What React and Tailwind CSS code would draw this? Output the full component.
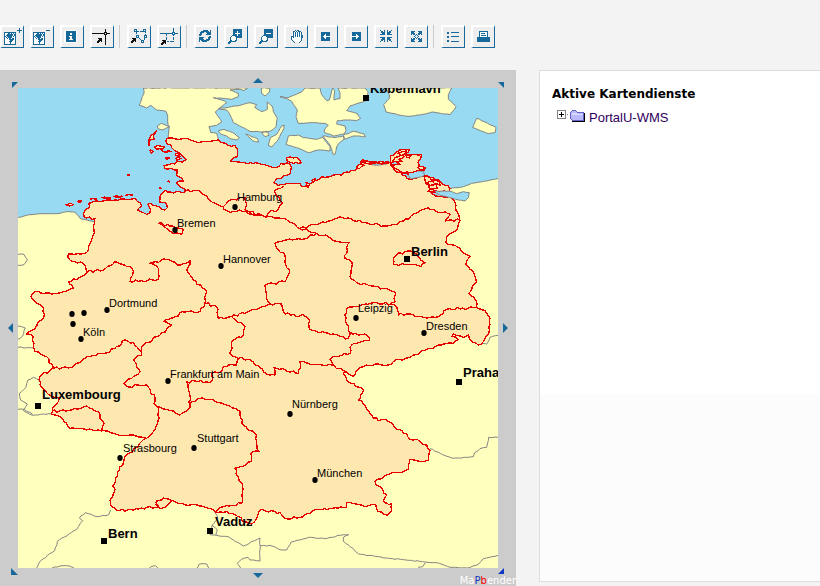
import React from "react";

const BLUE = "#17699c";

// ---------- toolbar icons ----------

function bitmap(rows, ox, oy) {
  let d = "";
  rows.forEach((row, y) => {
    [...row].forEach((c, x) => {
      if (c === "#") d += `M${x + ox} ${y + oy}h1v1h-1z`;
    });
  });
  return d;
}

const MAP_ROWS = [
  "############",
  "#...##.#.#.#",
  "#..######.##",
  "#.#######.##",
  "##.#####.#.#",
  "#.#.####...#",
  "#..#.##.##.#",
  "#....#####.#",
  "#.....###..#",
  "#....###...#",
  "#.....#....#",
  "#.....#....#",
  "############",
];
const POINTER = [".####", "..###", ".####", "###.#", "##..."];
const REFRESH = [
  "....#####..#",
  "..########.#",
  ".####..#####",
  ".##.....####",
  "###....#####",
  "##..........",
  "..........##",
  "#####....###",
  "####.....##.",
  "#####..####.",
  "#.########..",
  "#..#####....",
];
const SHRINK = [
  "#...#..#...#",
  ".##.#..#.##.",
  ".####..####.",
  "..###..###..",
  "#####..#####",
  "............",
  "............",
  "#####..#####",
  "..###..###..",
  ".####..####.",
  ".##.#..#.##.",
  "#...#..#...#",
];
const GROW = [
  "####...####",
  "###.....###",
  "####...####",
  "#.##.#.##.#",
  "....#.#....",
  "...#...#...",
  "....#.#....",
  "#.##.#.##.#",
  "####...####",
  "###.....###",
  "####...####",
];
const HAND = [
  "....#.##....",
  "..##.#.###..",
  "..#.#.#.#.#.",
  "..#.#.#.#.#.",
  "..#.#.#.#.#.",
  "..#.#.#.#.##",
  "###.#.#.#.##",
  "#.#.......##",
  "#.........#.",
  "#.........#.",
  ".#........#.",
  "..#......#..",
  "...#....#...",
];

function Px({ rows, x, y, fill = BLUE }) {
  return <path d={bitmap(rows, x, y)} fill={fill} />;
}

function MapSheet({ x }) {
  return (
    <>
      <rect x={x} y="7" width="12" height="13" fill="#fff" />
      <Px rows={MAP_ROWS} x={x} y={7} />
    </>
  );
}

function Node({ x, y, stroke = BLUE }) {
  return <rect x={x + 0.5} y={y + 0.5} width="2" height="2" fill="#fff" stroke={stroke} />;
}

function Lens({ x, plus }) {
  return (
    <>
      <rect x={x} y="4" width="9" height="9" fill={BLUE} />
      <path d={plus ? `M${x + 2} 8h5v1h-5zM${x + 4} 6h1v5h-1z` : `M${x + 2} 8h5v1h-5z`} fill="#fff" />
      <path d={`M${x - 1} 15L${x - 5} 19`} stroke={BLUE} strokeWidth="2.5" />
      <circle cx={x + 0.5} cy="13.5" r="3" fill="#fff" stroke={BLUE} />
    </>
  );
}

const ICONS = {
  addMap: <><MapSheet x={4} /><path d="M17 5h5v1h-5zM19 3h1v5h-1z" fill={BLUE} /></>,
  removeMap: <><MapSheet x={3} /><path d="M16 5h4v1h-4z" fill={BLUE} /></>,
  info: <><rect x="4" y="5" width="13" height="13" fill="#fff" /><rect x="6" y="6" width="10" height="11" fill={BLUE} /><path d="M10 8h2v2h-2zM9 11h3v3h1v1h-4v-1h1v-2h-1z" fill="#fff" /></>,
  coordinate: <><path d="M2 8h18v1h-18zM15 4h1v16h-1z" fill="#111" /><Node x={14} y={7} stroke="#111" /><Px rows={POINTER} x={7} y={13} fill="#111" /></>,
  area: <><path d="M9 6L13 7L18 6L19 11L16 17L10 11Z" fill="none" stroke={BLUE} strokeDasharray="3 1" /><Node x={7} y={4} /><Node x={16} y={4} /><Node x={9} y={10} /><Node x={17} y={10} /><Node x={14} y={15} /><Px rows={POINTER} x={4} y={13} fill="#111" /></>,
  distance: <><path d="M3 8h18v1h-18zM16 3h1v8h-1zM9 9h1v2h-1zM9 12h1v3h-1zM16 12h1v3h-1zM10 16h2v1h-2zM13 16h4v1h-4z" fill={BLUE} /><Node x={15} y={7} /><Px rows={POINTER} x={4} y={15} fill="#111" /></>,
  refresh: <Px rows={REFRESH} x={5} y={5} />,
  zoomIn: <Lens x={9} plus />,
  zoomOut: <Lens x={10} />,
  pan: <><path d="M9 6h8l1 6l-2 5h-5l-3-4z" fill="#fff" /><Px rows={HAND} x={7} y={5} /></>,
  back: <><rect x="7" y="7" width="9" height="9" fill={BLUE} /><path d="M9 11h9v1h-9zM10 10h1v3h-1zM11 9h1v5h-1z" fill="#fff" /></>,
  forward: <><rect x="8" y="7" width="9" height="9" fill={BLUE} /><path d="M6 11h9v1h-9zM13 10h1v3h-1zM12 9h1v5h-1z" fill="#fff" /></>,
  shrink: <Px rows={SHRINK} x={6} y={5} />,
  grow: <Px rows={GROW} x={7} y={6} />,
  legend: <path d="M6 7h2v2h-2zM6 11h2v2h-2zM6 15h2v2h-2zM10 7h8v1h-8zM10 11h8v1h-8zM10 16h8v1h-8z" fill={BLUE} />,
  print: <><rect x="8.5" y="6.5" width="8" height="7" fill="#fff" stroke={BLUE} /><path d="M10 8h4v1h-4zM10 10h5v1h-5zM6 12h13v5h-13z" fill={BLUE} /></>,
};

const TOOL_GROUPS = [
  [["addMap", "Karte hinzufügen"], ["removeMap", "Karte entfernen"], ["info", "Information"], ["coordinate", "Koordinate"]],
  [["area", "Fläche messen"], ["distance", "Strecke messen"]],
  [["refresh", "Neu laden"], ["zoomIn", "Vergrößern"], ["zoomOut", "Verkleinern"], ["pan", "Verschieben"], ["back", "Zurück"], ["forward", "Vor"], ["shrink", "Ausschnitt"], ["grow", "Gesamtansicht"]],
  [["legend", "Legende"], ["print", "Drucken"]],
];

function Toolbar() {
  return (
    <div role="toolbar" aria-label="Werkzeuge" className="flex h-[70px] pt-[25px]">
      {TOOL_GROUPS.map((group, i) => (
        <div key={i} className="flex shrink-0">
          {i > 0 && <div className="mr-[7px] ml-[5px] h-[23px] w-px bg-[#ccc]" />}
          <div className="flex gap-1.5">
            {group.map(([id, label]) => (
              <button
                key={id}
                type="button"
                aria-label={label}
                className="flex h-[23px] w-6 border-t-2 border-l-2 border-r border-b border-t-white border-l-white border-r-[#17699c] border-b-[#17699c] bg-[#eee]"
              >
                <svg viewBox="2 2 21 20" className="h-5 w-[21px]" shapeRendering="crispEdges" aria-hidden="true">
                  {ICONS[id]}
                </svg>
              </button>
            ))}
          </div>
        </div>
      ))}
    </div>
  );
}

// ---------- map geometry (three units per screen pixel) ----------

function parse(s) {
  return s.trim().split(/\s+/).map((p) => p.split(",").map(Number));
}

function trace(s, amount, closed) {
  let seed = 7;
  const rnd = () => {
    seed = (seed * 16807) % 2147483647;
    return seed / 2147483647 - 0.5;
  };
  const pts = parse(s);
  if (closed) pts.push(pts[0]);
  const out = [pts[0]];
  for (let i = 1; i < pts.length; i++) {
    const [ax, ay] = pts[i - 1];
    const [bx, by] = pts[i];
    const len = Math.hypot(bx - ax, by - ay);
    const n = Math.floor(len / 8);
    for (let k = 1; k < n; k++) {
      const o = rnd() * amount;
      out.push([
        Math.round(ax + ((bx - ax) * k) / n - ((by - ay) / len) * o),
        Math.round(ay + ((by - ay) * k) / n + ((bx - ax) / len) * o),
      ]);
    }
    out.push([bx, by]);
  }
  return "M" + out.map((p) => p.join(" ")).join("L") + (closed ? "Z" : "");
}

const LAND = [
  "430,264 432,280 424,300 418,316 440,324 452,316 470,330 498,334 503,346 504,374 508,378 504,414 560,420 600,432 640,426 655,420 650,400 632,398 627,380 650,376 665,366 655,350 646,336 680,308 665,300 640,293 695,298 715,290 715,280 690,270 722,268 732,272 743,264",
  "655,326 685,322 720,316 750,308 770,314 764,322 785,335 802,328 802,306 816,318 820,335 832,355 828,380 810,394 785,396 750,394 727,382 700,368 690,345 680,330",
  "655,393 672,388 698,398 718,412 712,420 690,416 680,408 662,402",
  "737,402 772,416 776,426 758,422",
  "785,398 803,396 807,406 795,410",
  "853,376 847,395 830,425 815,441 805,436 812,412 830,403 845,378",
  "785,264 810,264 808,276 795,288 785,280",
  "840,290 865,293 905,276 915,264 960,264 965,284 980,302 988,300 998,264 1004,272 1002,300 1020,296 1020,278 1014,264 1095,264 1104,275 1104,300 1080,308 1050,318 1040,332 1072,341 1082,355 1070,362 1042,360 1012,362 1010,372 1035,378 1038,392 1032,402 1000,408 972,396 975,386 985,376 975,370 945,368 895,370 888,350 892,330 875,304 860,296",
  "865,408 895,405 910,413 950,418 968,412 980,428 990,440 990,453 955,450 925,458 890,443 858,433",
  "968,408 1005,413 1030,408 1032,418 1018,428 1010,440 1006,462 1000,464 990,435",
  "1030,406 1060,394 1092,402 1096,410 1060,408 1035,418",
  "1155,264 1168,284 1168,296 1151,314 1158,336 1220,349 1260,345 1300,336 1350,344 1368,320 1345,298 1345,284 1355,264",
  "1430,355 1488,382 1485,398 1465,401 1418,383",
  "472,378 484,370 498,376 508,380 496,386 486,390 474,386",
  "48,655 80,646 120,641 180,640 200,635 225,636 240,655 285,666 400,760 700,800 1100,800 1330,570 1350,566 1390,560 1415,550 1460,543 1500,533 1500,1710 48,1710",
];

const GERMANY =
  "285,656 252,651 255,630 270,618 266,610 290,603 320,600 380,598 404,595 412,604 425,618 412,630 430,638 440,643 450,638 444,612 460,616 478,620 495,630 502,623 500,610 478,606 480,588 495,570 512,576 555,576 555,568 538,558 530,548 550,543 545,533 530,526 532,510 495,506 492,496 515,490 548,486 558,478 540,460 515,443 498,423 500,415 555,416 595,428 640,422 655,420 665,428 685,436 705,436 712,448 712,470 690,483 735,488 775,490 820,503 860,488 870,493 872,520 850,528 825,543 822,548 835,556 870,551 900,550 905,560 920,558 940,543 965,530 1025,525 1070,508 1088,479 1110,485 1170,488 1185,510 1232,538 1275,528 1315,540 1350,566 1348,574 1290,576 1300,584 1350,590 1362,600 1380,663 1372,688 1340,710 1337,728 1380,745 1410,770 1398,795 1422,820 1430,845 1415,870 1407,880 1430,905 1428,922 1455,932 1470,955 1468,990 1450,1025 1435,1035 1410,1020 1405,1005 1390,1012 1360,1002 1355,1010 1375,1018 1360,1030 1305,1040 1240,1065 1180,1085 1165,1095 1135,1092 1080,1102 1060,1130 1040,1115 1030,1120 1040,1140 1090,1170 1075,1200 1095,1217 1110,1240 1135,1262 1155,1258 1190,1288 1220,1300 1230,1318 1250,1318 1280,1335 1290,1350 1285,1380 1270,1385 1230,1378 1225,1408 1205,1418 1170,1422 1125,1445 1160,1485 1150,1505 1175,1512 1175,1530 1162,1545 1135,1535 1128,1515 1095,1520 1070,1512 1040,1508 1040,1522 955,1528 900,1552 855,1555 840,1538 780,1530 772,1550 755,1572 735,1565 715,1550 680,1535 650,1538 640,1530 600,1518 530,1508 510,1500 495,1496 470,1503 468,1514 485,1525 440,1522 400,1530 350,1532 332,1515 330,1500 345,1468 338,1458 358,1410 372,1378 400,1348 440,1315 400,1305 350,1303 310,1292 260,1290 210,1285 200,1270 180,1250 155,1242 158,1225 175,1205 178,1193 155,1188 120,1155 120,1130 150,1112 160,1102 140,1070 105,1055 100,1040 100,1010 80,1002 105,985 132,950 130,925 110,910 92,890 105,875 165,880 220,865 205,845 245,830 262,815 250,790 210,780 205,762 260,758 270,730 283,700 280,680";

const BORDERS = [
  "555,573 600,573 640,608 670,620",
  "670,620 680,610 700,598 735,593 740,613 735,628 755,643 780,646 750,643 720,630 690,638 672,628 670,620",
  "750,636 790,648 855,655 900,686 925,693 950,700 985,710 1010,724 1047,728 1035,775 1055,785 1050,830 1075,850 1150,865 1187,878 1185,905 1170,912 1190,920 1195,948",
  "800,648 805,638 835,628 848,608 830,588 822,573 850,558",
  "900,686 945,673 985,663 1020,650 1095,668 1160,678 1210,663 1270,628 1285,623 1325,638 1352,643 1335,663 1380,660",
  "950,698 915,716 860,720 825,730 830,745 855,765 855,785 868,820 855,845 795,855 800,885 810,912",
  "1195,945 1220,942 1270,952 1315,950 1340,928 1428,922",
  "1175,912 1120,908 1080,918 1040,925 1035,945 1045,990 1050,1000 1095,1002 1110,1020 1055,1035 1050,1060 1000,1070 990,1078 1000,1095",
  "695,950 750,933 810,912 845,912 855,942 915,948 930,960 928,988 975,998 1045,1015 1055,995",
  "715,1075 745,1078 780,1102 800,1122 825,1125 822,1102 895,1120 900,1085 925,1090 995,1095 1040,1118",
  "262,815 310,810 345,785 390,800 400,815 390,845 475,838 475,805 450,790 500,778 540,795 570,782 560,810 580,840 620,875 615,910",
  "615,910 600,935 545,935 535,948 490,965 515,975 480,1005 425,1040 425,1065 400,1080 420,1115 372,1150 380,1160 440,1155 465,1195 462,1212 475,1225 478,1255 460,1295 440,1315",
  "160,1105 215,1102 260,1070 330,1055 375,1020 400,1028 425,1055",
  "615,910 650,920 655,955 695,950 735,980 730,1005 700,1020 690,1060 715,1075 710,1095 670,1100 665,1115 635,1120 635,1145 560,1145 570,1190 568,1225 540,1245 528,1240 500,1228 465,1215",
  "570,1225 575,1205 600,1195 640,1200 690,1218 720,1235 725,1270 770,1305 772,1350 778,1355 752,1360 755,1385 705,1405 728,1460 725,1510 670,1520 645,1535",
  "155,1235 215,1230 260,1218 295,1235 300,1255 312,1270 305,1295",
  "475,670 510,678 550,688 545,703 520,700 505,690 475,670",
  "1180,775 1190,765 1225,753 1248,760 1262,780 1275,788 1262,800 1250,795 1180,793 1180,775",
];

const ISLANDS = [
  "198,614 212,610 220,614 208,618", "232,604 244,602 240,608", "272,597 290,596 288,598", "305,593 330,592 332,594", "340,590 365,588 368,590", "378,585 396,584 398,586",
  "470,392 456,404 447,420 447,438 450,420 462,418 460,406", "464,440 480,438 494,440 488,448 470,448", "450,450 460,454 454,460", "496,472 510,474 500,478",
  "485,452 494,455 515,454 498,458", "528,474 545,476 530,482", "526,460 536,462 540,470 528,466", "480,562 483,565 480,566", "384,524 388,524 388,526 384,526", "505,542 508,546 504,545",
  "860,474 890,472 904,488 880,490 862,484",
  "1173,490 1172,468 1186,460 1200,450 1228,448 1224,458 1208,462 1240,464 1264,464 1262,476 1254,486 1258,498 1276,502 1274,510 1252,512 1232,518 1212,518 1198,514 1182,504 1176,494 1200,494 1188,482",
  "1178,484 1186,472 1196,470 1204,462 1212,470 1196,478 1206,484 1190,486", "1194,460 1208,454 1220,456 1204,466", "1218,466 1232,468 1228,474 1220,472",
  "1180,506 1196,510 1210,518 1222,516 1226,522 1204,518 1188,514", "1252,502 1268,500 1276,506 1262,510",
  "1070,502 1084,492 1092,496 1078,506", "1090,488 1112,486 1128,488 1112,492", "1130,488 1150,486 1164,490 1146,492", "1084,486 1100,482 1108,486",
  "1274,528 1290,534 1298,544 1280,548 1290,556 1278,552", "1296,540 1318,546 1320,556 1304,552", "1286,560 1308,554 1312,566 1292,570", "1284,574 1298,566 1306,578",
  "918,548 930,552 924,562", "936,540 946,536 940,548",
  "468,1508 490,1494 516,1502 498,1520 478,1526",
];

const WATER = [
  "1302,574 1350,573 1370,581 1390,575 1408,578 1405,593 1395,603 1375,600 1350,593 1320,586",
  "1226,518 1250,512 1270,514 1274,526 1256,532 1234,536 1224,526",
  "1104,492 1130,491 1160,492 1130,496",
];

const GREY_LINES = [
  "54,763 72,763 82,778 72,794 54,796",
  "54,978 76,984 68,1008 54,1018", "54,1042 100,1044",
  "100,1132 84,1140 78,1162 58,1180 62,1200 82,1212 70,1232 98,1246 130,1242 155,1242", "100,1132 118,1142", "54,1228 72,1228 98,1243",
  "332,1530 326,1544 292,1550 256,1538 238,1554 248,1562 230,1588 172,1624 164,1652 122,1682 110,1704",
  "156,1704 180,1698 208,1698 222,1704", "448,1704 466,1697 474,1704", "592,1704 598,1692 620,1692 626,1704",
  "645,1538 654,1556 636,1576 630,1604 685,1610 730,1638 780,1614 780,1683 750,1680 744,1672 724,1678 712,1690 722,1704",
  "780,1638 810,1636 844,1650 860,1650 874,1626 926,1612 974,1616 1030,1604 1046,1604 1030,1612 1030,1624 1060,1646 1076,1662 1160,1674 1276,1686 1310,1688 1350,1702 1402,1704 1436,1692 1450,1676 1494,1666",
  "1276,1688 1268,1700 1254,1702", "636,1576 652,1590 648,1606",
  "1290,1346 1328,1364 1358,1375 1420,1370 1424,1358 1440,1346 1460,1342 1466,1312 1494,1312",
  "1438,1030 1460,1032 1470,1012 1494,1006",
];

// x, y of the marker, then x, baseline of the name, in screen pixels
const CITIES = [
  ["Hamburg", 235, 207, 237, 201], ["Bremen", 175, 230, 177, 227], ["Hannover", 221, 266, 223, 263],
  ["Dortmund", 107, 310, 109, 307], ["Köln", 81, 339, 83, 336], ["Leipzig", 356, 318, 358, 312],
  ["Dresden", 424, 333, 426, 330], ["Frankfurt am Main", 168, 381, 170, 378], ["Nürnberg", 290, 414, 292, 408],
  ["Stuttgart", 194, 448, 197, 442], ["Strasbourg", 120, 458, 123, 452], ["München", 315, 480, 317, 477],
  ["", 72, 314], ["", 84, 313], ["", 73, 324],
];
const CAPITALS = [
  ["København", 366, 98, 370, 93], ["Berlin", 407, 259, 411, 256], ["Praha", 459, 382, 463, 377],
  ["Luxembourg", 38, 406, 42, 399], ["Bern", 104, 541, 108, 538], ["Vaduz", 210, 531, 215, 526],
];

function GermanyMap() {
  return (
    <svg viewBox="18 88 480 480" className="block h-auto w-full" role="img" aria-label="Karte von Deutschland">
      <rect x="18" y="88" width="480" height="480" fill="#98daf2" />
      <g transform="scale(0.333333)" shapeRendering="crispEdges" strokeWidth="3" strokeLinejoin="round">
        {LAND.map((p) => <path key={p} d={trace(p, 2, true)} fill="#ffffbe" stroke="#848484" />)}
        {GREY_LINES.map((p) => <path key={p} d={trace(p, 3, false)} fill="none" stroke="#848484" />)}
        <path d={trace(GERMANY, 7, true)} fill="#ffe8b0" stroke="#e60000" strokeWidth="4" />
        {WATER.map((p) => <path key={p} d={trace(p, 2, true)} fill="#98daf2" stroke="#848484" />)}
        {ISLANDS.map((p) => <path key={p} d={trace(p, 4, true)} fill="#ffe8b0" stroke="#e60000" strokeWidth="4" />)}
        {BORDERS.map((p) => <path key={p} d={trace(p, 8, false)} fill="none" stroke="#e60000" strokeWidth="4" />)}
      </g>
      <g className="font-['Liberation_Sans',Arial,sans-serif] text-[11px]">
        {CITIES.map(([name, x, y, tx, ty]) => (
          <g key={x + "-" + y}>
            <ellipse cx={x} cy={y} rx="2.7" ry="3" />
            {name && <text x={tx} y={ty}>{name}</text>}
          </g>
        ))}
      </g>
      <g className="font-['Liberation_Sans',Arial,sans-serif] text-[13px] font-bold">
        {CAPITALS.map(([name, x, y, tx, ty]) => (
          <g key={name}>
            <rect x={x - 3} y={y - 3} width="6" height="6" />
            <text x={tx} y={ty}>{name}</text>
          </g>
        ))}
      </g>
    </svg>
  );
}

function PanButton({ label, place, size, points, color = BLUE }) {
  return (
    <button type="button" aria-label={label} className={"flex " + place}>
      <svg width={size[0]} height={size[1]} viewBox={`0 0 ${size[0]} ${size[1]}`} aria-hidden="true">
        <polygon points={points} fill={color} />
      </svg>
    </button>
  );
}

function MapFrame() {
  return (
    <section className="relative grid w-[516px] shrink-0 grid-cols-[18px_1fr_18px] grid-rows-[18px_auto_18px] bg-[#ccc]">
      <PanButton label="Nordwest" place="items-end justify-end" size={[6, 6]} points="0,0 6,0 0,6" />
      <PanButton label="Nord" place="items-end justify-center pb-[5px]" size={[10, 5]} points="0,5 5,0 10,5" />
      <PanButton label="Nordost" place="items-end justify-start" size={[6, 6]} points="0,0 6,0 6,6" />
      <PanButton label="West" place="items-center justify-end pr-[5px]" size={[5, 10]} points="5,0 0,5 5,10" />
      <GermanyMap />
      <PanButton label="Ost" place="items-center justify-start pl-[5px]" size={[5, 10]} points="0,0 5,5 0,10" />
      <PanButton label="Südwest" place="items-start justify-end" size={[7, 7]} points="0,0 7,7 0,7" />
      <PanButton label="Süd" place="items-start justify-center pt-[5px]" size={[10, 5]} points="0,0 10,0 5,5" />
      <PanButton label="Südost" place="items-start justify-start" size={[6, 6]} points="6,0 6,6 0,6" color="#1038c0" />
      <div className="absolute right-0 bottom-0 font-['DejaVu_Sans',sans-serif] text-[10px] leading-[10px] text-white">
        Ma<span className="text-[#1038c0]">P</span><span className="text-[#f00]">b</span>ender
      </div>
    </section>
  );
}

function ServicePanel() {
  return (
    <aside className="mb-1 ml-[23px] flex min-w-0 flex-1 flex-col border-y border-l border-[#ddd] bg-[#fcfcfc]">
      <div className="h-[323px] bg-white pt-3.5 pl-3">
        <h2 className="font-['DejaVu_Sans',sans-serif] text-xs leading-[18px] font-bold text-black">Aktive Kartendienste</h2>
        <div className="mt-1.5 flex items-start pl-[5px]">
          <button type="button" aria-label="Aufklappen" className="mt-px flex">
            <svg width="12" height="12" viewBox="0 0 12 12" shapeRendering="crispEdges" aria-hidden="true">
              <rect x="0.5" y="0.5" width="8" height="8" fill="#fff" stroke="#848484" />
              <path d="M2 4h5v1h-5zM4 2h1v5h-1z" />
              <path d="M10 4h1v1h-1z" fill="#848484" />
            </svg>
          </button>
          <svg width="16" height="14" viewBox="0 0 16 14" className="mt-px mr-[3px] ml-px" shapeRendering="crispEdges" aria-hidden="true">
            <path d="M2 3h13v9h-13z" fill="#000" />
            <path d="M0.5 2.5L2.5 0.5H5.5L7.5 2.5H13.5V10.5H2.5L0.5 8.5Z" fill="#b8b8fa" stroke="#6464c8" />
            <path d="M2 3h5M2 4h11" stroke="#dcdcff" />
          </svg>
          <a href="#portalu" className="font-['Liberation_Sans',Arial,sans-serif] text-[13px] leading-[18px] text-[#30005c]">PortalU-WMS</a>
        </div>
      </div>
    </aside>
  );
}

export default function App() {
  return (
    <div className="min-h-screen overflow-hidden bg-[#f3f3f3]">
      <Toolbar />
      <main className="flex">
        <MapFrame />
        <ServicePanel />
      </main>
    </div>
  );
}
